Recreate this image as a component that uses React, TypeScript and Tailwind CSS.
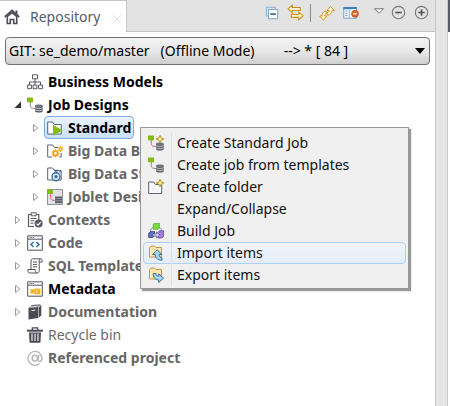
import React from 'react';

type IconProps = { className?: string };
type SvgProps = IconProps & { children: React.ReactNode };

function Svg({ children, className = 'size-4' }: SvgProps) {
  return (
    <svg viewBox="0 0 16 16" className={`${className} shrink-0`} fill="none" aria-hidden="true">
      {children}
    </svg>
  );
}

const Home = () => (
  <Svg>
    <path d="M.8 8 8 1.4 15.2 8" stroke="#4d4f58" strokeWidth="1.8" />
    <path d="M11.5 1.5h2v4l-2-2z" fill="#4d4f58" />
    <path d="M3.3 7.5v7h3v-4h3.4v4h3v-7L8 3.6z" stroke="#4d4f58" strokeWidth="1.6" />
  </Svg>
);

const CollapseAll = () => (
  <Svg className="size-3.5">
    <path d="M3.500 11.500h-2V1.500h10v2" stroke="#8fb2d2" strokeWidth="1.200" />
    <path d="M4 4h10.500v10.500H4z" fill="#fff" stroke="#7fa6cb" strokeWidth="1.200" />
    <path d="M6 9.200h6.500" stroke="#1f4a7c" strokeWidth="1.600" />
  </Svg>
);

const Link = () => (
  <Svg className="size-[17px]">
    <path d="M1 4.6 5 1v2.3h7.5v2.8H5v2.4z" fill="#fff6d0" stroke="#cf8f1c" />
    <path d="M15 11.2 11 7.6v2.2H4v2.8h7V15z" fill="#fff6d0" stroke="#cf8f1c" />
  </Svg>
);

const Refresh = () => (
  <Svg>
    <path d="M11.500 1.300 15.300 5.500H13c0 2.600-1.500 4.300-4.300 4.600l-.9-2.400c1.700-.2 2.400-.9 2.400-2.200H8z" fill="#fff6d0" stroke="#cf8f1c" strokeWidth=".9" />
    <path d="M4.300 15.300.7 11H3c0-2.600 1.200-4.500 4-4.800l.6 2.400c-1.400.2-1.900 1.100-1.900 2.400h2.200z" fill="#fff6d0" stroke="#cf8f1c" strokeWidth=".9" />
  </Svg>
);

const Perspective = () => (
  <Svg>
    <path d="M.8 2.500h12.700v10.700H.8z" fill="#fff" stroke="#6d9ccc" />
    <path d="M.5 2h13.300v2.200H.5z" fill="#3b7fc4" />
    <path d="M2.200 6h2.500M2.200 8.300h2.500M2.200 10.600h2.500" stroke="#79a8d0" />
    <path d="M6.300 4v9" stroke="#8eb4d8" />
    <circle cx="12" cy="8.800" r="3.400" fill="#e1682c" stroke="#b24b18" strokeWidth=".8" />
    <path d="M10.200 8.800h3.600" stroke="#fff" strokeWidth="1.200" />
  </Svg>
);

const ViewMenu = () => (
  <Svg className="size-3">
    <path d="M2 5h12l-6 6z" fill="#fff" stroke="#666" strokeWidth="1.200" />
  </Svg>
);

const Round = ({ plus = false }: { plus?: boolean }) => (
  <Svg className="size-[15px]">
    <circle cx="8" cy="8" r="6.600" stroke="#77777b" strokeWidth="1.200" />
    <path d={plus ? 'M4.500 8h7M8 4.500v7' : 'M4.500 8h7'} stroke="#55555b" strokeWidth="1.800" />
  </Svg>
);

const Hierarchy = () => (
  <Svg>
    <path d="M8 5v3M2.500 11V8h11v3M8 8v3" stroke="#55575f" />
    <path d="M5.500.8h5v4h-5zM.6 11h3.800v3.700H.6zM6.100 11h3.800v3.700H6.100zM11.600 11h3.800v3.700h-3.800z" stroke="#55575f" />
  </Svg>
);

const JobShapes = () => (
  <>
    <path d="M3.300 4v4.500c0 2 1 3 5 3" stroke="#b56d83" />
    <path d="M0 .5h6v4.800H0z" fill="#84bd0c" />
    <path d="M8 9v5c0 2 7.800 2 7.800 0V9z" fill="#5d606c" />
    <ellipse cx="11.900" cy="9" rx="3.900" ry="1.400" fill="#70737e" />
    <path d="M8 10.500c1 1.300 6.800 1.300 7.800 0M8 12.700c1 1.300 6.800 1.300 7.800 0" stroke="#d7d8dc" strokeWidth=".8" />
  </>
);

const Sparkle = () => (
  <path d="m12 .3 1.200 2.700 2.600 1-2.600 1.100L12 7.800l-1.200-2.700-2.600-1.100 2.600-1z" fill="#fff3a0" stroke="#b18a1c" strokeWidth=".9" />
);

const Job = () => <Svg><JobShapes /></Svg>;
const NewJob = () => <Svg><JobShapes /><Sparkle /></Svg>;

const Joblet = () => (
  <Svg>
    <path d="M.5.5h15v15H.5z" fill="#e2e2e2" stroke="#333" strokeDasharray="1 1" />
    <path d="M3.500 4v4.500c0 2 1 3 5 3" stroke="#cf6d83" />
    <path d="M.5.5H6V5H.5z" fill="#84bd0c" />
    <path d="M8 7.500h7v6.700H8z" fill="#5d606c" />
    <path d="M8 9.500h7M8 11.800h7" stroke="#a3a5ac" strokeWidth=".7" />
  </Svg>
);

const FolderPath = () => <path d="M.7 14V2h5l1.800 2.500h6.700V14z" fill="#fff" stroke="#5b6270" />;

const FolderPlay = () => (
  <Svg><FolderPath /><path d="m6 5 9.500 5.300L6 15.700z" fill="#84bd0c" /></Svg>
);

const FolderGear = () => (
  <Svg>
    <path d="M5 14H.7V2h5l1.800 2.500h3.500" stroke="#5b6270" />
    <path d="M8.500 6.500v7.800M4.600 10.400h7.800M5.700 7.600l5.600 5.600M11.300 7.600l-5.600 5.600" stroke="#f5a01d" strokeWidth="1.500" />
    <circle cx="8.500" cy="10.400" r="2.100" fill="#fff" stroke="#f5a01d" strokeWidth="1.600" />
    <path d="M13.500 3v6M10.900 4.500l5.200 3M16.100 4.500l-5.200 3" stroke="#f5a01d" />
    <circle cx="13.500" cy="6" r="1.300" fill="#fff" stroke="#f5a01d" strokeWidth="1.200" />
    <path d="M14.200 10v4h-2" stroke="#5b6270" />
  </Svg>
);

const FolderWatch = () => (
  <Svg>
    <FolderPath />
    <path d="M7 4.500h4M9 4.500v2M12.500 6.500l1-1" stroke="#356ba3" strokeWidth="1.400" />
    <circle cx="9" cy="10.700" r="4" fill="#dcebf7" stroke="#356ba3" strokeWidth="1.400" />
    <circle cx="9" cy="10.700" r="1.600" fill="#356ba3" />
  </Svg>
);

const NewFolder = () => (
  <Svg>
    <path d="M.7 14.500V3h5l1.800 2.500h6.200v9z" fill="#f7f7f7" stroke="#5b6270" />
    <Sparkle />
  </Svg>
);

const Clipboard = () => (
  <Svg>
    <path d="M7 14.500H1.500v-12h10.300V8" stroke="#555963" strokeWidth="1.200" />
    <path d="M4.200.8h5v3h-5z" fill="#fff" stroke="#555963" />
    <path d="M3.500 6.500h6M3.500 8.800h4M3.500 11.200h3" stroke="#555963" />
    <circle cx="11.600" cy="11.600" r="4" fill="#555963" />
    <path d="m9.600 11.600 1.500 1.500 2.600-3" stroke="#fff" strokeWidth="1.200" />
  </Svg>
);

const WindowPath = () => (
  <>
    <path d="M.7.8h14.600v14.400H.7z" fill="#fff" stroke="#4f535d" />
    <path d="M1 4.200h14" stroke="#4f535d" />
    <path d="M2.500 2.500h4.500" stroke="#4f535d" strokeDasharray="1 .7" />
  </>
);

const Code = () => (
  <Svg><WindowPath /><path d="M6.500 7 4 9.500 6.500 12M9.500 7 12 9.500 9.500 12" stroke="#2f6ba4" strokeWidth="1.500" /></Svg>
);

const Metadata = () => (
  <Svg>
    <WindowPath />
    <path d="M8 7.500h5.500v6H8z" fill="#f6b71d" />
    <path d="M3 9h5M3 11.800h5M4 10.400h4" stroke="#f6b71d" strokeWidth="1.400" />
    <path d="M9.500 9v3" stroke="#fff0b8" />
  </Svg>
);

const Scroll = () => (
  <Svg>
    <path d="M4 11.500V3c0-1.500.8-2.200 2.200-2.200h7c1.300 0 2 .8 2 2V4h-3M12.200 4V2.700c0-1 .5-1.900 1.400-1.900M12.200 4v8.500c0 1.500-.8 2.500-2.200 2.500H3c-1.300 0-2.200-1-2.200-2.500v-1h7.500v1c0 1.500.6 2.500 1.700 2.500" stroke="#50545e" />
    <path d="M6 4h4M6 6.400h4M6 8.800h4" stroke="#50545e" />
  </Svg>
);

const Book = () => (
  <Svg>
    <path d="m1.500 4 9.800-1v11l-9.800 1.500z" fill="#494b55" />
    <path d="M1.500 4 5 1l9-.8-2.700 2.800z" fill="#686a73" />
    <path d="M2.800 3.100 11.600 2" stroke="#fff" strokeWidth=".8" />
    <path d="M11.800 3.400 14.300.8v10.500l-2.500 2.500z" fill="#494b55" />
    <path d="m4.500 6.500 3.800-.4" stroke="#fff" />
  </Svg>
);

const Trash = () => (
  <Svg>
    <path d="M5.300 3V.9h5.400V3" stroke="#494b55" strokeWidth="1.300" />
    <path d="M0 2.700h16v2H0z" fill="#494b55" />
    <path d="M2 5.500h12l-.6 10.300H2.600z" fill="#494b55" />
    <path d="M5 6.500v7.500M8 6.500v7.500M11 6.500v7.500" stroke="#fff" strokeWidth="1.100" />
  </Svg>
);

const At = () => (
  <Svg>
    <path d="M12.500 13.800A7 7 0 1 1 15 8c0 2.500-1 3.500-2.300 3.500-1.500 0-1.700-1-1.500-2.500l.6-4" stroke="#b9b9b9" strokeWidth="1.400" />
    <ellipse cx="7.900" cy="8.200" rx="2.700" ry="2.900" stroke="#b9b9b9" strokeWidth="1.500" />
  </Svg>
);

const Build = () => (
  <Svg>
    <path d="M2.500 9c.2-3 1.300-4.200 3-4.500M13.500 8c0-2-1-3.200-2.400-3.700" stroke="#8086a7" />
    <path d="m5.300 1.300 1.200-1h4.800v4.900l-1.200 1H5.300z" fill="#76e03b" stroke="#4f9926" strokeWidth=".7" />
    <path d="m.6 10.300 2-1.700h3.900v4.200L4.800 14.500H.6z" fill="#5d72bd" stroke="#34477e" strokeWidth=".8" />
    <path d="m10 9.300 1.500-1.500h4v5.700L14 15h-4z" fill="#a280d8" stroke="#6840a8" strokeWidth=".8" />
    <path d="M4.500 11h4V9l3.500 3-3.500 3v-2h-4z" fill="#d3cdee" stroke="#54549a" strokeWidth=".7" />
  </Svg>
);

const Transfer = ({ out = false }: { out?: boolean }) => (
  <Svg>
    <path d="M1.500 12V2.500L3 1h3.500L8 2.500h5.500V12z" fill="#fbe3ac" stroke="#c6924a" />
    <path d="M2.500 3.500v8" stroke="#fff4d2" />
    {out ? (
      <path d="M5.300 6.500h2.700c0 2 .8 2.700 2.700 2.700V6.800l4.800 4.400-4.800 4.300v-2.600C7 12.900 5.300 10.500 5.300 6.500z" fill="#a5d8ee" stroke="#27658e" strokeWidth=".9" />
    ) : (
      <path d="M9.200 4.800 13.700 9.500h-2.500c0 2 .8 3 2.800 3.300v2.400c-4-.2-6.800-2-6.800-5.700H4.700z" fill="#a5d8ee" stroke="#27658e" strokeWidth=".9" />
    )}
  </Svg>
);

type Node = {
  label: string;
  icon: React.ReactNode;
  arrow?: 'open' | 'closed';
  child?: boolean;
  selected?: boolean;
  tone?: string;
};

const dim = 'font-bold text-[#666]';
const strong = 'font-bold text-black';

const nodes: Node[] = [
  { label: 'Business Models', icon: <Hierarchy />, tone: strong },
  { label: 'Job Designs', icon: <Job />, arrow: 'open', tone: strong },
  { label: 'Standard', icon: <FolderPlay />, arrow: 'closed', child: true, selected: true, tone: strong },
  { label: 'Big Data Batch', icon: <FolderGear />, arrow: 'closed', child: true },
  { label: 'Big Data Streaming', icon: <FolderWatch />, arrow: 'closed', child: true },
  { label: 'Joblet Designs', icon: <Joblet />, arrow: 'closed', child: true },
  { label: 'Contexts', icon: <Clipboard />, arrow: 'closed' },
  { label: 'Code', icon: <Code />, arrow: 'closed' },
  { label: 'SQL Templates', icon: <Scroll />, arrow: 'closed' },
  { label: 'Metadata', icon: <Metadata />, arrow: 'closed', tone: strong },
  { label: 'Documentation', icon: <Book />, arrow: 'closed' },
  { label: 'Recycle bin', icon: <Trash />, tone: 'text-[#6b6b6b]' },
  { label: 'Referenced project', icon: <At /> },
];

function Arrow({ state }: { state?: 'open' | 'closed' }) {
  return (
    <svg viewBox="0 0 8 8" className="size-2 shrink-0" fill="none" aria-hidden="true">
      {state === 'open' && <path d="M7 .5v6.500H.5z" fill="#333" />}
      {state === 'closed' && <path d="M1.500.5v7L5.800 4z" fill="#fff" stroke="#999" />}
    </svg>
  );
}

const menu = [
  { label: 'Create Standard Job', icon: <NewJob /> },
  { label: 'Create job from templates', icon: <Job /> },
  { label: 'Create folder', icon: <NewFolder /> },
  { label: 'Expand/Collapse', icon: null },
  { label: 'Build Job', icon: <Build /> },
  { label: 'Import items', icon: <Transfer />, active: true },
  { label: 'Export items', icon: <Transfer out /> },
];

const tool = 'flex items-center justify-center';

export default function App() {
  return (
    <div className="flex min-h-screen bg-[#e5e5e5] font-['Noto_Sans',sans-serif] text-sm">
      <main className="relative flex min-w-0 flex-1 flex-col border-r border-[#c8c8c8] bg-white">
        <header className="flex h-8 border-b border-[#c5c5c5] bg-[#e3e3e3]">
          <div className="-mb-px flex w-[127px] shrink-0 items-center border-t border-r border-[#c5c5c5] bg-white pl-1">
            <Home />
            <h1 className="ml-2.5 text-sm text-[#555b6b]">Repository</h1>
            <button aria-label="Close" className="mr-1 ml-auto pt-1">
              <Svg className="size-2.5"><path d="m2 2 12 12M14 2 2 14" stroke="#ddd" strokeWidth="1.500" /></Svg>
            </button>
          </div>
          <div className="flex flex-1 items-center justify-end pr-1.5 pb-1.5">
            <button aria-label="Collapse all" className={tool}><CollapseAll /></button>
            <button aria-label="Link with editor" className={`${tool} ml-2`}><Link /></button>
            <span className="mr-2 ml-1.5 h-[18px] w-px bg-[#8b8b8b]" />
            <button aria-label="Refresh" className={tool}><Refresh /></button>
            <button aria-label="Repository settings" className={`${tool} ml-2`}><Perspective /></button>
            <button aria-label="View menu" className={`${tool} ml-3.5 pb-1`}><ViewMenu /></button>
            <button aria-label="Minimize" className={`${tool} ml-1.5`}><Round /></button>
            <button aria-label="Maximize" className={`${tool} ml-2`}><Round plus /></button>
          </div>
        </header>

        <div className="relative mx-[5px] mt-[5px]">
          <select
            aria-label="Branch"
            className="block h-7 w-full appearance-none rounded-sm border border-[#707070] bg-linear-to-b from-[#f3f3f3] via-[#e8e8e8] to-[#cfcfcf] pl-[3px] text-sm text-black"
          >
            <option>{'GIT: se_demo/master\u00a0\u00a0 (Offline Mode)\u00a0\u00a0\u00a0\u00a0\u00a0\u00a0\u00a0 --> * [ 84 ]'}</option>
          </select>
          <svg viewBox="0 0 10 6" className="pointer-events-none absolute top-[11px] right-[5px] h-1.5 w-2.5" aria-hidden="true">
            <path d="M0 0h10L5 6z" fill="#000" />
          </svg>
        </div>

        <ul role="tree" className="mt-[5px]">
          {nodes.map((n) => (
            <li
              key={n.label}
              role="treeitem"
              aria-selected={!!n.selected}
              className={`flex h-[23px] items-center whitespace-nowrap ${n.child ? 'gap-1 pl-8' : 'gap-0.5 pl-3.5'}`}
            >
              <Arrow state={n.arrow} />
              <span
                className={`flex h-[23px] items-center gap-[5px] rounded-sm border px-0.5 ${
                  n.selected ? 'border-[#84acdd] bg-linear-to-b from-[#eaf3fd] to-[#c8dffa]' : 'border-transparent'
                }`}
              >
                {n.icon}
                <span className={n.tone ?? dim}>{n.label}</span>
              </span>
            </li>
          ))}
        </ul>

        <div
          role="menu"
          className="absolute top-[127px] left-[140px] w-[269px] border border-[#979797] bg-[#f0f0f0] px-0.5 pt-1 pb-0.5 shadow-[2px_2px_1px_#999]"
        >
          {menu.map((m) => (
            <button
              key={m.label}
              role="menuitem"
              className={`flex h-[22px] w-full items-center rounded-sm border pl-1 text-left whitespace-nowrap text-[#111] ${
                m.active ? 'border-[#aecff7] bg-linear-to-b from-[#f1f4f8] to-[#e4edf8]' : 'border-transparent'
              }`}
            >
              <span className="flex h-[22px] w-6 shrink-0 items-center border-r border-[#e2e2e2]">{m.icon}</span>
              <span className="pl-[5px]">{m.label}</span>
            </button>
          ))}
        </div>
      </main>

      <div className="w-[11px] shrink-0" />
      <aside className="flex w-[3px] shrink-0 flex-col border-l border-[#c8c8c8] bg-white">
        <div className="h-8 bg-[#555b66]" />
      </aside>
    </div>
  );
}
